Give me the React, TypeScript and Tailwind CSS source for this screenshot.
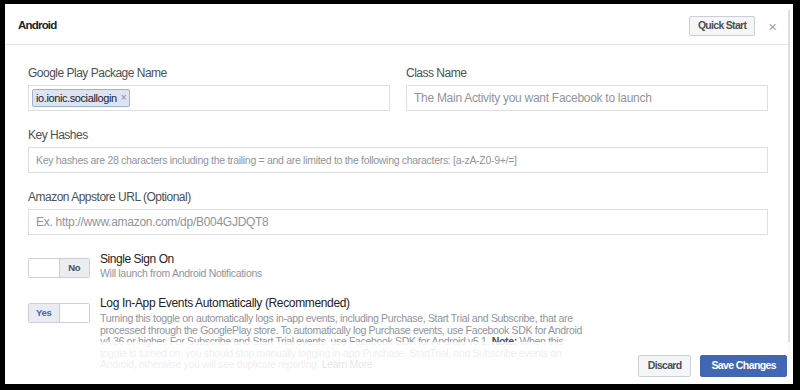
import type { ReactNode } from 'react';

const Field = ({ label, children }: { label: string; children: ReactNode }) => (
  <div className="flex flex-col">
    <label className="text-[12px] tracking-[-0.5px] leading-[16px] text-[#4b4f56] mb-[4px]">{label}</label>
    {children}
  </div>
);

const TextInput = ({ placeholder, small = false }: { placeholder: string; small?: boolean }) => (
  <input
    type="text"
    placeholder={placeholder}
    className={`h-[26px] w-full border border-[#dddfe2] px-[7px] ${
      small ? 'text-[10.5px] tracking-[-0.3px]' : 'text-[12px] tracking-[-0.28px]'
    } text-[#1d2129] placeholder:text-[#90949c] outline-none`}
  />
);

const Toggle = ({ on }: { on: boolean }) => (
  <div className="flex h-[20px] w-[62px] shrink-0 border border-[#ccd0d5] rounded-[2px] overflow-hidden text-[9.5px] tracking-[-0.3px] font-bold">
    {on ? (
      <>
        <span className="flex-1 flex items-center justify-center bg-[#e9ecf2] text-[#4267b2] border-r border-[#ccd0d5]">Yes</span>
        <span className="flex-1 bg-white" />
      </>
    ) : (
      <>
        <span className="flex-1 bg-white border-r border-[#ccd0d5]" />
        <span className="flex-1 flex items-center justify-center bg-[#ebedf0] text-[#4b4f56]">No</span>
      </>
    )}
  </div>
);

export default function App() {
  return (
    <div className="w-[800px] h-[390px] bg-black pt-[4px] pl-[5px] pr-[7px] pb-[6px] font-['Liberation_Sans',Arial,sans-serif]">
      <div className="relative h-full bg-white flex overflow-hidden">
        {/* Main column */}
        <div className="flex-1 flex flex-col">
          {/* Header */}
          <div className="h-[41px] shrink-0 flex items-center border-b border-[#e5e5e5] pt-[4px] pl-[13px] pr-[11px]">
            <h2 className="flex-1 text-[11.5px] tracking-[-0.8px] font-bold text-[#1d2129]">Android</h2>
            <button className="h-[20px] px-[8px] bg-[#f5f6f7] border border-[#ccd0d5] rounded-[2px] text-[10.5px] tracking-[-0.7px] font-bold text-[#4b4f56]">
              Quick Start
            </button>
            <span className="ml-[13px] text-[15px] leading-none text-[#a0a3a8]">×</span>
          </div>

          {/* Body */}
          <div className="flex flex-col gap-[16px] pt-[20px] pl-[23px] pr-[20px]">
            <div className="grid grid-cols-2 gap-x-[16px]">
              <Field label="Google Play Package Name">
                <div className="h-[26px] border border-[#dddfe2] flex items-center px-[3px]">
                  <span className="flex items-center h-[18px] px-[3px] gap-[4px] bg-[#dce3f1] border border-[#9cb4d8] rounded-[2px] text-[11px] tracking-[-0.4px] text-[#1d2129]">
                    io.ionic.sociallogin
                    <span className="text-[#7f8ba3] text-[10px] leading-none">×</span>
                  </span>
                </div>
              </Field>
              <Field label="Class Name">
                <TextInput placeholder="The Main Activity you want Facebook to launch" />
              </Field>
            </div>

            <Field label="Key Hashes">
              <TextInput
                small
                placeholder="Key hashes are 28 characters including the trailing = and are limited to the following characters: [a-zA-Z0-9+/=]"
              />
            </Field>

            <Field label="Amazon Appstore URL (Optional)">
              <TextInput placeholder="Ex. http://www.amazon.com/dp/B004GJDQT8" />
            </Field>

            {/* Toggles */}
            <div className="flex flex-col gap-[16px] mt-[1px]">
              <div className="flex items-start gap-[10px]">
                <div className="mt-[6px]">
                  <Toggle on={false} />
                </div>
                <div className="flex flex-col">
                  <span className="text-[12px] tracking-[-0.45px] leading-[15px] text-[#1d2129]">Single Sign On</span>
                  <span className="text-[10.5px] tracking-[-0.3px] leading-[13px] text-[#90949c]">
                    Will launch from Android Notifications
                  </span>
                </div>
              </div>

              <div className="flex items-start gap-[10px]">
                <div className="mt-[7px]">
                  <Toggle on />
                </div>
                <div className="flex flex-col w-[482px]">
                  <span className="text-[12px] tracking-[-0.35px] leading-[15px] text-[#1d2129]">
                    Log In-App Events Automatically (Recommended)
                  </span>
                  <p className="mt-[2px] text-[10.5px] tracking-[-0.33px] leading-[11.5px] text-[#90949c]">
                    Turning this toggle on automatically logs in-app events, including Purchase, Start Trial and Subscribe, that are
                    processed through the GooglePlay store. To automatically log Purchase events, use Facebook SDK for Android
                    v4.36 or higher. For Subscribe and Start Trial events, use Facebook SDK for Android v5.1.{' '}
                    <b className="text-[#4b4f56]">Note:</b> When this toggle is turned on, you should stop manually logging in-app
                    Purchase, StartTrial, and Subscribe events on Android, otherwise you will see duplicate reporting.{' '}
                    <span className="text-[#365899]">Learn More</span>
                  </p>
                </div>
              </div>
            </div>
          </div>
        </div>

        {/* Scrollbar track */}
        <div className="w-[5px] shrink-0 pt-[6px]">
          <div className="w-[2px] h-full bg-[#dcdee3]" />
        </div>

        {/* Footer over the fading body */}
        <div className="absolute left-0 right-0 bottom-0 h-[42px] bg-white/85 flex items-end justify-end gap-[9px] pr-[6px] pb-[7px]">
          <button className="h-[22px] px-[9px] bg-[#f5f6f7] border border-[#ccd0d5] rounded-[2px] text-[10.5px] tracking-[-0.7px] font-bold text-[#4b4f56]">
            Discard
          </button>
          <button className="h-[22px] px-[10px] bg-[#4267b2] border border-[#4267b2] rounded-[2px] text-[10.5px] tracking-[-0.6px] font-bold text-white">
            Save Changes
          </button>
        </div>
      </div>
    </div>
  );
}
